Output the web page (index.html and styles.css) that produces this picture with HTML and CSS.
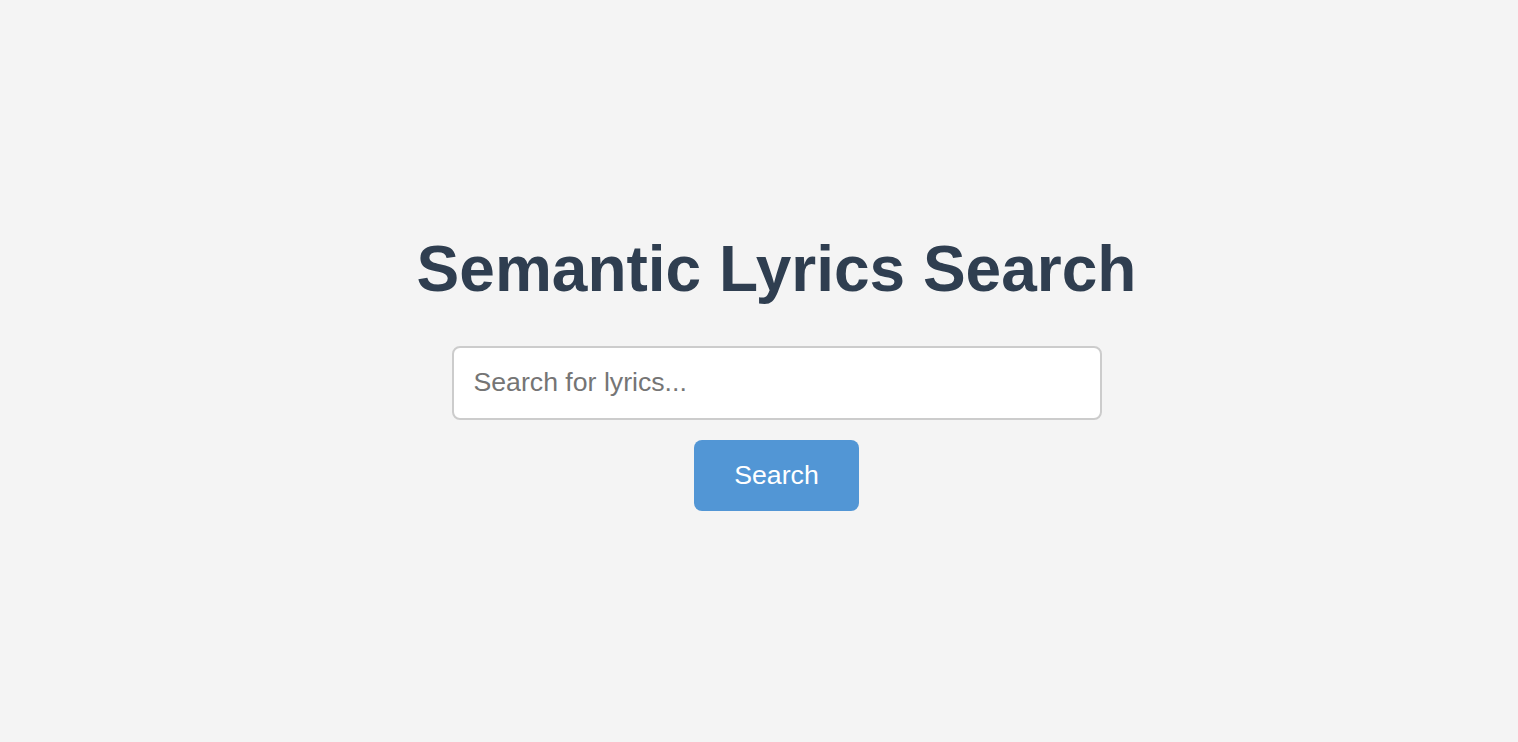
FILE: index.html
```html
<!DOCTYPE html>
<html lang="en">
<head>
<meta charset="utf-8">
<title>Semantic Lyrics Search</title>
<link rel="stylesheet" href="styles.css">
</head>
<body>
<main class="page">
  <h1 class="title">Semantic Lyrics Search</h1>
  <form class="search">
    <input class="search-input" type="text" placeholder="Search for lyrics...">
    <button class="search-btn" type="button">Search</button>
  </form>
</main>
</body>
</html>
```

FILE: styles.css
```css
html, body {
  margin: 0;
  padding: 0;
  background: #f4f4f4;
  font-family: "Liberation Sans", Arial, sans-serif;
}
.page {
  min-height: 100vh;
  box-sizing: border-box;
  display: flex;
  flex-direction: column;
  align-items: center;
  justify-content: center;
  padding-left: 35px;
}
.title {
  margin: 0 0 40px;
  font-size: 64px;
  font-weight: 700;
  color: #2f3e50;
  line-height: 74px;
}
.search {
  display: flex;
  flex-direction: column;
  align-items: center;
  gap: 20px;
}
.search-input {
  box-sizing: border-box;
  width: 650px;
  height: 74px;
  padding: 0 20px;
  border: 2px solid #cccccc;
  border-radius: 8px;
  background: #fff;
  font-family: inherit;
  font-size: 26.67px;
  color: #333;
  outline: none;
}
.search-input::placeholder {
  color: #757575;
}
.search-btn {
  box-sizing: border-box;
  height: 71px;
  padding: 0 40px;
  border: none;
  border-radius: 8px;
  background: #5296d5;
  color: #fff;
  font-family: inherit;
  font-size: 26.67px;
  cursor: pointer;
}
```
